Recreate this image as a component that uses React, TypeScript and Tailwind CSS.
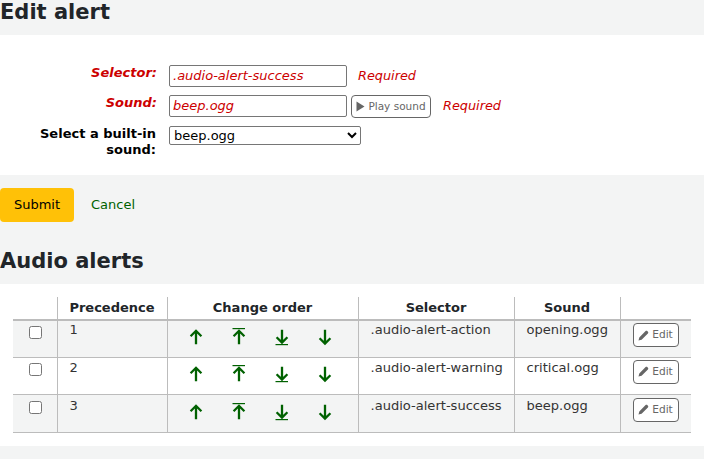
const font = '[font-family:"DejaVu_Sans",sans-serif]';

function Up({ bar }: { bar?: boolean }) {
  return (
    <svg width="14" height="18" viewBox="0 0 14 18" className="block">
      {bar && <rect x="0.5" y="0" width="12.5" height="1.2" fill="#006100" />}
      <path d="M7 16.2V3M1.6 8.2L7 2.8L12.4 8.2" fill="none" stroke="#006100" strokeWidth="2.3" />
    </svg>
  );
}

function Down({ bar }: { bar?: boolean }) {
  return (
    <svg width="14" height="18" viewBox="0 0 14 18" className="block">
      <path d={bar ? "M7 1.8V14M1.6 9.2L7 14.6L12.4 9.2" : "M7 1.8V15M1.6 10.2L7 15.6L12.4 10.2"} fill="none" stroke="#006100" strokeWidth="2.3" />
      {bar && <rect x="0.5" y="16" width="12.5" height="1.2" fill="#006100" />}
    </svg>
  );
}

function EditButton({ top }: { top: string }) {
  return (
    <button className={`${top} flex h-[24px] w-[46px] items-center justify-center gap-[3px] rounded-[4px] border border-[#666] bg-white text-[10.6px] text-[#666]`}>
      <svg width="11" height="11" viewBox="0 0 11 11">
        <path d="M0.5 10.5L1.3 7.4L7.6 1.1C8.1 0.6 8.8 0.6 9.3 1.1L9.9 1.7C10.4 2.2 10.4 2.9 9.9 3.4L3.6 9.7Z" fill="#666" />
      </svg>
      Edit
    </button>
  );
}

const rows = [
  { n: 1, sel: ".audio-alert-action", snd: "opening.ogg", bg: "bg-[#f3f4f4]", h: "h-[37px]", arrow: "pt-[7px]", btn: "mt-[2px]", text: "pt-[1px]", box: "pt-[5px]" },
  { n: 2, sel: ".audio-alert-warning", snd: "critical.ogg", bg: "bg-white", h: "h-[37px]", arrow: "pt-[7px]", btn: "mt-[2px]", text: "pt-[2px]", box: "pt-[5px]" },
  { n: 3, sel: ".audio-alert-success", snd: "beep.ogg", bg: "bg-[#f3f4f4]", h: "h-[38px]", arrow: "pt-[8px]", btn: "mt-[3px]", text: "pt-[3px]", box: "pt-[6px]" },
];

export default function App() {
  return (
    <div className={`${font} h-[459px] w-[704px] overflow-hidden bg-[#f3f4f4] text-[13px] text-[#000]`}>
      <h1 className="h-[35px] text-[21px] leading-[24px] font-bold text-[#212529]">Edit alert</h1>

      <div className="flex h-[140px] flex-col bg-white pt-[30px]">
        <div className="flex h-[22px] items-start">
          <label className="w-[157px] text-right text-[13px] leading-[16px] font-bold text-[#c00] italic">Selector:</label>
          <input readOnly value=".audio-alert-success" className="ml-[12px] h-[22px] w-[178px] rounded-[2px] border border-[#767676] px-[3px] pb-[1px] text-[13px] text-[#c00] italic outline-none" />
          <span className="ml-[11px] text-[12.85px] leading-[22px] text-[#c00] italic">Required</span>
        </div>
        <div className="mt-[8px] flex h-[22px] items-start">
          <label className="w-[157px] text-right text-[13px] leading-[16px] font-bold text-[#c00] italic">Sound:</label>
          <input readOnly value="beep.ogg" className="ml-[12px] h-[22px] w-[178px] rounded-[2px] border border-[#767676] px-[3px] pb-[1px] text-[13px] text-[#c00] italic outline-none" />
          <button className="ml-[4px] flex h-[23px] w-[80px] items-center justify-center gap-[3px] rounded-[4px] border border-[#666] bg-white text-[10.5px] text-[#666]">
            <svg width="9" height="11" viewBox="0 0 9 11"><path d="M0.5 0.5L8.5 5.5L0.5 10.5Z" fill="#666" /></svg>
            Play sound
          </button>
          <span className="ml-[12px] text-[12.85px] leading-[22px] text-[#c00] italic">Required</span>
        </div>
        <div className="mt-[9px] flex items-start">
          <label className="w-[156px] text-right text-[13px] leading-[16px] font-bold">Select a built-in sound:</label>
          <select className="ml-[13px] h-[19px] w-[192px] rounded-[2px] border border-[#767676] bg-white text-[13px] leading-[15px]">
            <option>beep.ogg</option>
          </select>
        </div>
      </div>

      <div className="mt-[13px] flex items-center">
        <button className="h-[34px] w-[74px] rounded-[4px] bg-[#ffc107] text-[13px] text-[#000]">Submit</button>
        <a className="ml-[17px] text-[13px] text-[#006100]">Cancel</a>
      </div>

      <h2 className="mt-[27px] h-[35px] text-[21px] leading-[24px] font-bold text-[#212529]">Audio alerts</h2>

      <div className="h-[162px] bg-white px-[13px] pt-[13px]">
        <table className="w-[678px] table-fixed border-collapse text-[13.05px] text-[#333]">
          <colgroup>
            <col className="w-[44px]" />
            <col className="w-[110px]" />
            <col className="w-[191px]" />
            <col className="w-[156px]" />
            <col className="w-[106px]" />
            <col className="w-[71px]" />
          </colgroup>
          <thead>
            <tr className="h-[23px] border-b-2 border-[#bcbcbc] text-center text-[13px] font-bold text-[#212529]">
              <th className="p-0"></th>
              <th className="border-l border-[#bcbcbc] p-0">Precedence</th>
              <th className="border-l border-[#bcbcbc] p-0">Change order</th>
              <th className="border-l border-[#bcbcbc] p-0">Selector</th>
              <th className="border-l border-[#bcbcbc] p-0">Sound</th>
              <th className="border-l border-[#bcbcbc] p-0"></th>
            </tr>
          </thead>
          <tbody>
            {rows.map((r) => (
              <tr key={r.n} className={`${r.bg} ${r.h} border-b border-[#bcbcbc] align-top`}>
                <td className={`p-0 ${r.box}`}>
                  <div className="ml-[16px] h-[13px] w-[13px] rounded-[2.5px] border border-[#767676] bg-white" />
                </td>
                <td className={`border-l border-[#bcbcbc] p-0 pl-[12px] leading-[16px] ${r.text}`}>{r.n}</td>
                <td className={`border-l border-[#bcbcbc] p-0 ${r.arrow}`}>
                  <div className="flex gap-[29px] pl-[21px]">
                    <Up />
                    <Up bar />
                    <Down bar />
                    <Down />
                  </div>
                </td>
                <td className={`border-l border-[#bcbcbc] p-0 pl-[12px] leading-[16px] ${r.text}`}>{r.sel}</td>
                <td className={`border-l border-[#bcbcbc] p-0 pl-[12px] leading-[16px] ${r.text}`}>{r.snd}</td>
                <td className="border-l border-[#bcbcbc] p-0 pl-[12px]"><EditButton top={r.btn} /></td>
              </tr>
            ))}
          </tbody>
        </table>
      </div>
    </div>
  );
}
